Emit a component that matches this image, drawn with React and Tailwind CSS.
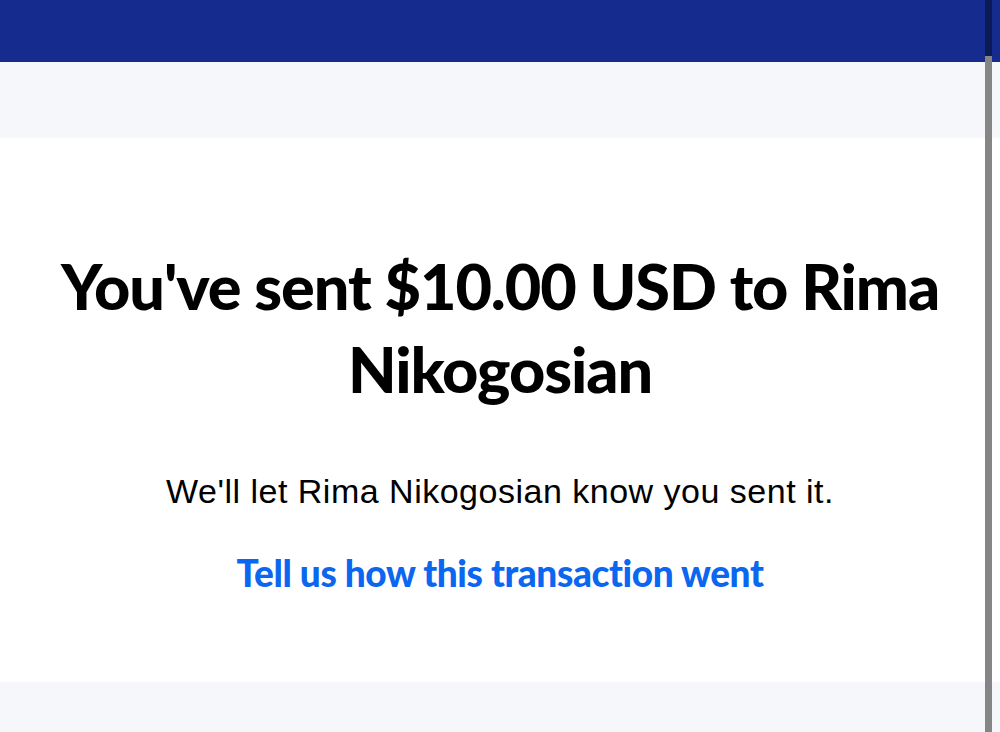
import React from 'react';

const App = () => {
  return (
    <div className="relative min-h-[732px] bg-[#f5f7fa] overflow-hidden">
      <header className="h-[62px] bg-[#152c8e]" />
      <div className="h-[76px] bg-[#f5f7fa]" />

      <main className="bg-white h-[544px] flex flex-col items-center pt-[106px]">
        <h1
          className="text-center text-black font-black text-[63px] leading-[83px] tracking-[-1.1px] px-[50px]"
          style={{ fontFamily: 'Lato, "Open Sans", sans-serif' }}
        >
          You've sent $10.00 USD to Rima Nikogosian
        </h1>
        <p
          className="mt-[61px] text-[34px] leading-[40px] tracking-[0.5px] text-black"
          style={{ fontFamily: '"Liberation Sans", Arial, sans-serif' }}
        >
          We'll let Rima Nikogosian know you sent it.
        </p>
        <a
          href="#"
          className="mt-[40px] text-[37px] leading-[44px] font-black text-[#0b66f0] tracking-[-0.4px]"
          style={{ fontFamily: 'Lato, "Open Sans", sans-serif' }}
        >
          Tell us how this transaction went
        </a>
      </main>

      <div className="h-[50px] bg-[#f5f7fa]" />

      {/* scroll indicator */}
      <div className="absolute top-0 right-[8px] w-[7px] h-[56px] bg-black/40" />
      <div className="absolute top-[56px] bottom-0 right-[8px] w-[7px] bg-[#858585]" />
    </div>
  );
};

export default App;
